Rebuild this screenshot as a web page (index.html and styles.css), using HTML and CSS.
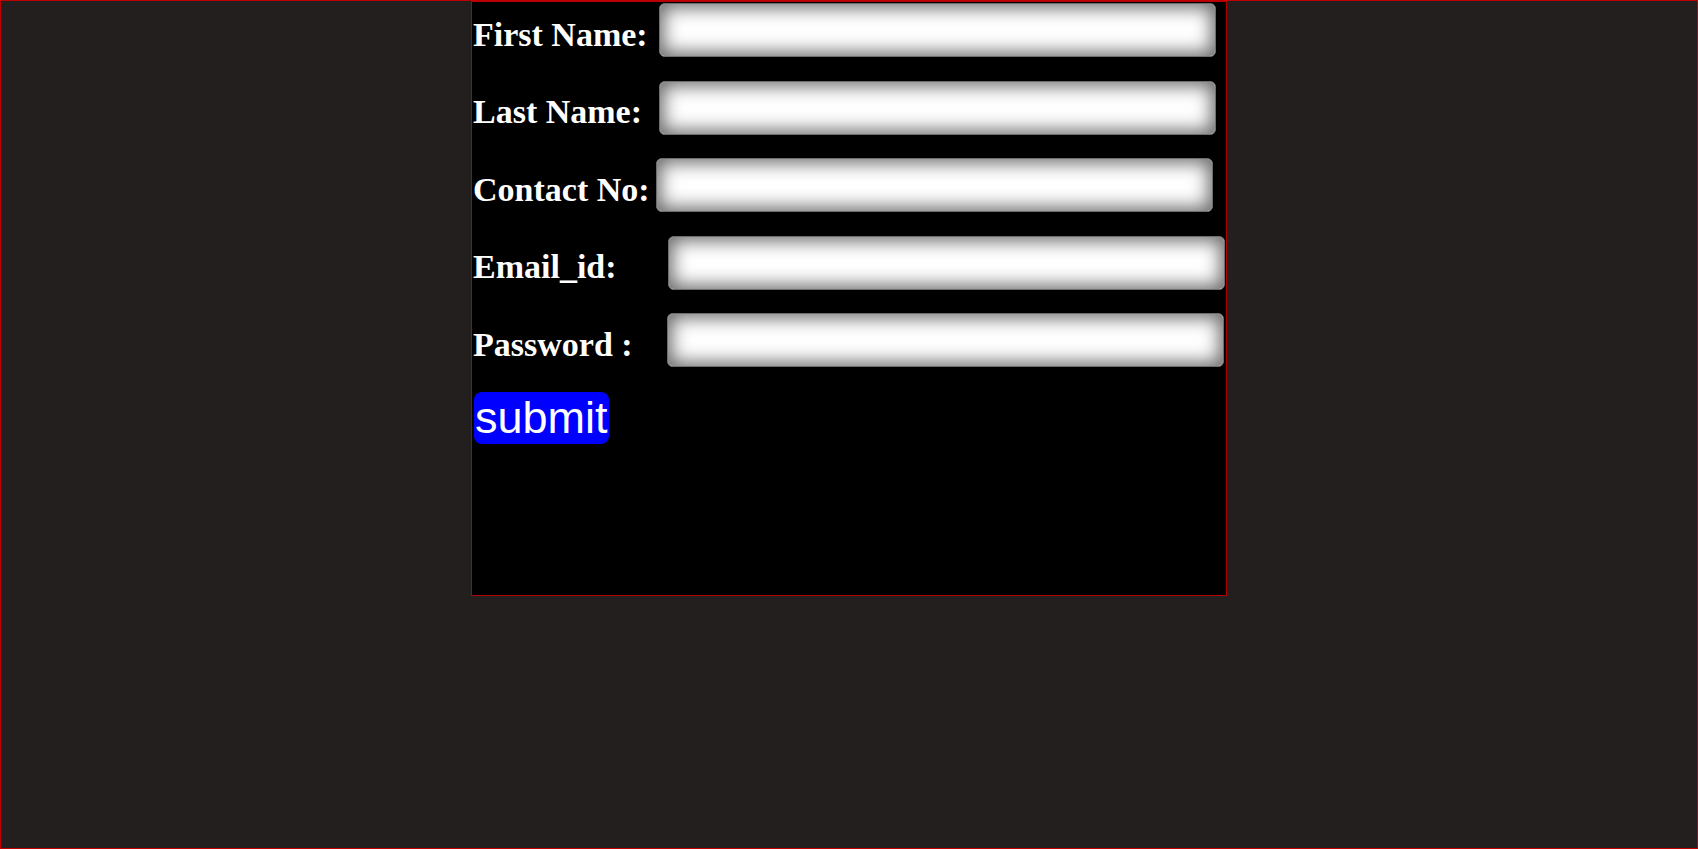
FILE: index.html
```html
<!DOCTYPE html>
<html>
<head>
<meta charset="utf-8">
<title>Form</title>
<link rel="stylesheet" href="styles.css">
</head>
<body>
<form class="box">
  <div class="row">
    <label class="lbl w-name">First Name:</label>
    <input class="field" type="text">
  </div>
  <div class="row">
    <label class="lbl w-name">Last Name:</label>
    <input class="field" type="text">
  </div>
  <div class="row">
    <label class="lbl w-contact">Contact No:</label>
    <input class="field" type="text">
  </div>
  <div class="row">
    <label class="lbl w-mail">Email_id:</label>
    <input class="field" type="text">
  </div>
  <div class="row">
    <label class="lbl w-pass">Password :</label>
    <input class="field" type="password">
  </div>
  <button class="submit" type="button">submit</button>
</form>
</body>
</html>
```
FILE: styles.css
```css
html {
  background: #231f1f;
}
body {
  margin: 0;
  height: 847px;
  border: 1px solid #c00000;
  background: #231f1f;
  font-family: "Liberation Serif", "Times New Roman", serif;
}
.box {
  box-sizing: border-box;
  width: 756px;
  height: 595px;
  margin: 0 auto;
  border: 1px solid #b00000;
  background: #000;
  padding-top: 1px;
  display: flex;
  flex-direction: column;
  align-items: flex-start;
}
.row {
  display: flex;
  align-items: center;
  height: 54px;
  margin-bottom: 23.5px;
}
.lbl {
  color: #fff;
  font-weight: bold;
  font-size: 34px;
  line-height: 38px;
  padding-top: 9px;
  padding-left: 1px;
  white-space: nowrap;
}
.w-name { width: 186px; }
.w-contact { width: 183px; }
.w-mail { width: 195px; }
.w-pass { width: 194px; }
.field {
  box-sizing: border-box;
  width: 557px;
  height: 54px;
  margin: 0;
  border: 1px solid #6e6e6e;
  border-radius: 6px;
  background: #fff;
  box-shadow: inset 0 0 18px 4px #6a6a6a;
  outline: none;
}
.submit {
  margin: 1.5px 0 0 2px;
  padding: 0 1px;
  height: 52px;
  border: none;
  border-radius: 8px;
  background: #0000ff;
  color: #fff;
  font-family: "Liberation Sans", Arial, sans-serif;
  font-size: 45px;
  line-height: 52px;
}
```
